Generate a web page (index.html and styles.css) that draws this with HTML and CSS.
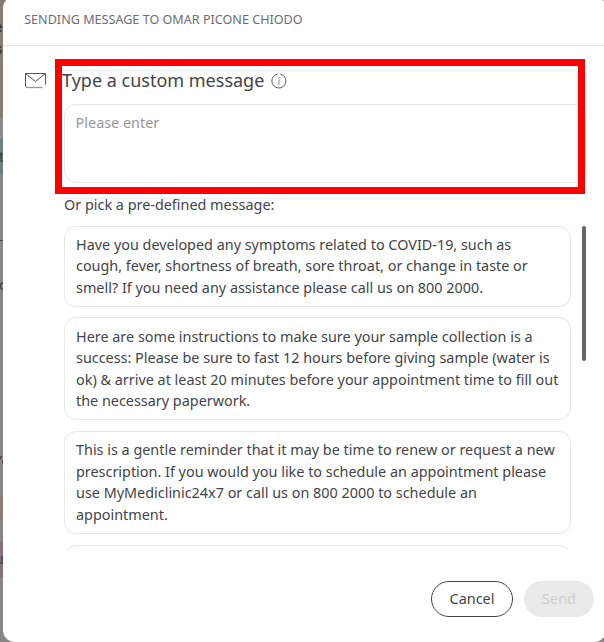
FILE: index.html
```html
<!DOCTYPE html>
<html lang="en">
<head>
<meta charset="utf-8">
<title>Send message</title>
<link rel="stylesheet" href="styles.css">
</head>
<body>
<div class="backdrop" aria-hidden="true">
  <div class="strip strip-top"><span class="bold">e</span><span class="bold">s</span></div>
  <div class="strip strip-grey"></div>
  <div class="strip strip-teal"><span>t</span></div>
  <div class="strip strip-rule"></div>
  <div class="strip strip-line"></div>
  <div class="strip strip-blank"><span>c</span></div>
  <div class="strip strip-name"><span>Ye</span></div>
  <div class="strip strip-tan"></div>
  <div class="strip strip-pink"><span>u</span></div>
</div>
<main class="modal">
  <header class="modal-header">SENDING MESSAGE TO OMAR PICONE CHIODO</header>
  <div class="modal-body">
    <svg class="mail" width="22" height="17" viewBox="0 0 22 17" fill="none" stroke="#55555a" stroke-width="1">
      <path d="M20.5 12.5V1.5H.5v13L1.5 15"/>
      <path d="M.5 1.5L10.5 9.5L20.5 1.5"/>
      <path d="M1 15.5H17.5" stroke="#99999c" stroke-width="1.3"/>
    </svg>
    <section class="content">
      <h1 class="title">Type a custom message
        <svg class="info" width="16" height="16" viewBox="0 0 16 16" fill="none" stroke="#55565a">
          <path d="M9.3 1.1A7 7 0 1 1 6.5 1.1"/>
          <path d="M8 6.5V12M8 4V5" stroke="#85868a"/>
        </svg>
      </h1>
      <div class="field">Please enter</div>
      <p class="label">Or pick a pre-defined message:</p>
      <div class="picker">
        <div class="messages">
          <div class="card">Have you developed any symptoms related to COVID-19, such as<br>cough, fever, shortness of breath, sore throat, or change in taste or<br>smell? If you need any assistance please call us on 800 2000.</div>
          <div class="card">Here are some instructions to make sure your sample collection is a<br>success: Please be sure to fast 12 hours before giving sample (water is<br>ok) &amp; arrive at least 20 minutes before your appointment time to fill out<br>the necessary paperwork.</div>
          <div class="card">This is a gentle reminder that it may be time to renew or request a new<br>prescription. If you would you like to schedule an appointment please<br>use MyMediclinic24x7 or call us on 800 2000 to schedule an<br>appointment.</div>
          <div class="card card-empty"></div>
        </div>
        <div class="thumb"></div>
      </div>
    </section>
  </div>
  <footer class="actions">
    <button class="btn cancel">Cancel</button>
    <button class="btn send" disabled>Send</button>
  </footer>
</main>
<div class="highlight"></div>
</body>
</html>
```

FILE: styles.css
```css
* { box-sizing: border-box; }
body {
  margin: 0;
  width: 604px;
  height: 642px;
  overflow: hidden;
  position: relative;
  background: #878787;
  color: #434448;
  font-family: "Noto Sans", sans-serif;
  font-size: 14.4px;
  line-height: 21.6px;
}
.backdrop {
  position: absolute;
  inset: 0;
  color: #3c3c3e;
}
.strip { width: 12px; overflow: hidden; }
.strip span { display: block; margin-left: -5px; }
.strip .bold { font-weight: 700; margin-left: -6px; }
.strip .bold + .bold { margin-left: -5px; }
.strip-top { height: 117px; padding-top: 16px; background: #857c76; }
.strip-grey { height: 22px; background: #8b8b8b; }
.strip-teal { height: 36px; padding-top: 7px; background: #6d8183; }
.strip-teal span { margin-left: -1px; }
.strip-rule { height: 65px; }
.strip-line { height: 1px; background: #444; }
.strip-blank { height: 209px; padding-top: 33px; }
.strip-blank span { margin-left: -1px; }
.strip-name { height: 46px; }
.strip-name span { margin-left: -6px; }
.strip-tan { height: 23px; background: #887d76; }
.strip-pink { height: 58px; padding-top: 29px; background: linear-gradient(#878787 22px, #87717a 22px); }
.modal {
  position: absolute;
  left: 3px;
  top: -4px;
  width: 603px;
  height: 646px;
  border-radius: 12px;
  background: #fff;
  display: flex;
  flex-direction: column;
}
.modal-header {
  height: 50px;
  padding: 14px 0 0 21.2px;
  border-bottom: 1px solid #e8e8e9;
  font-size: 12.6px;
  line-height: 20px;
  color: #6c6d72;
}
.modal-body {
  display: flex;
  height: 508px;
  padding: 22px 0 0 22px;
}
.mail { display: block; margin-top: 4px; flex: none; }
.content { margin-left: 17px; width: 522px; flex: none; }
.title {
  margin: 0 0 0 -2px;
  height: 36px;
  font-size: 18px;
  line-height: 25px;
  font-weight: 400;
  display: flex;
}
.info { margin: 5px 0 0 7px; }
.field {
  width: 522px;
  height: 79px;
  padding: 7px 10.6px;
  border: 1px solid #e8e8e9;
  border-radius: 12px;
  color: #96979a;
}
.label { margin: 11px 0 9.93px; }
.picker { display: flex; height: 324px; gap: 11px; }
.messages {
  flex: none;
  width: 507px;
  overflow: hidden;
  display: flex;
  flex-direction: column;
  gap: 10.74px;
}
.card {
  flex: none;
  padding: 7.2px 11px;
  border: 1px solid #e8e8e9;
  border-radius: 12px;
  white-space: nowrap;
}
.card-empty { height: 80px; margin-top: 0.5px; }
.thumb {
  flex: none;
  width: 4px;
  height: 135px;
  border-radius: 2px;
  background: #66676a;
}
.actions {
  display: flex;
  justify-content: flex-end;
  gap: 11px;
  padding: 27px 12px 0 0;
}
.btn {
  height: 36px;
  padding: 0;
  border-radius: 18px;
  font: inherit;
}
.cancel { width: 82px; border: 1px solid #434448; background: #fff; color: #434448; }
.send { width: 70px; border: 0; background: #eaeaea; color: #cdcdce; }
.highlight {
  position: absolute;
  left: 55px;
  top: 59px;
  width: 529.5px;
  height: 135px;
  border: 7px solid #f00;
}
```
